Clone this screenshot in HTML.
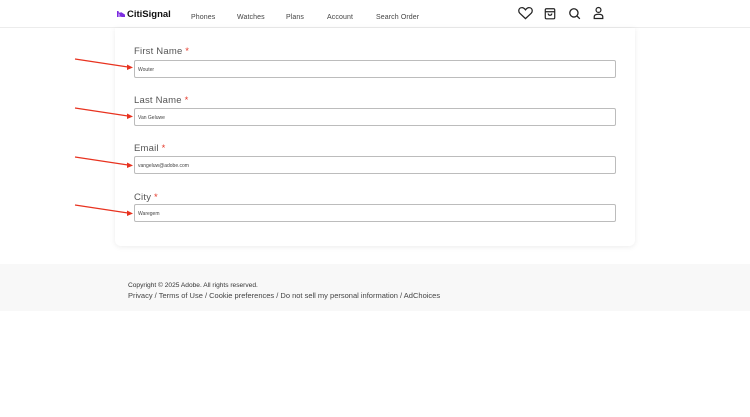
<!DOCTYPE html>
<html><head><meta charset="utf-8"><style>
*{margin:0;padding:0;box-sizing:border-box}
body{width:750px;height:417px;background:#fff;font-family:"Liberation Sans",sans-serif;position:relative;overflow:hidden}
.hdr{position:absolute;left:0;top:0;width:750px;height:28px;border-bottom:1px solid #ececec;background:#fff}
.logo{position:absolute;left:117px;top:9px;font-weight:bold;font-size:9.5px;color:#111}
.logo i{display:inline-block;width:8px;height:6px;background:#7c2ce0;margin-right:2px;vertical-align:0;clip-path:polygon(0 0,20% 0,20% 100%,0 100%,0 0,30% 30%,45% 30%,45% 100%,30% 100%,30% 30%,55% 20%,100% 60%,100% 100%,55% 100%);}
.nav{position:absolute;top:13.5px;font-size:7px;color:#444;letter-spacing:.1px}
.card{position:absolute;left:115px;top:28px;width:520px;height:218px;background:#fff;border-radius:0 0 6px 6px;box-shadow:0 1px 6px rgba(0,0,0,.08)}
.lbl{position:absolute;left:134px;font-size:9.5px;color:#555;letter-spacing:.2px}
.lbl b{color:#e53b2c;font-weight:normal}
.in{position:absolute;left:134px;width:482px;height:18px;border:1px solid #bcbcbc;border-radius:2px;font-size:5px;color:#444;padding:6px 0 0 3px}
.foot{position:absolute;left:0;top:264px;width:750px;height:47px;background:#f8f8f8}
.f1{position:absolute;left:128px;top:282px;font-size:6.6px;color:#333}
.f2{position:absolute;left:128px;top:291px;font-size:7.5px;color:#444}
</style></head><body>
<div class="hdr">
<div class="logo"><i></i>CitiSignal</div>
<div class="nav" style="left:191px">Phones</div>
<div class="nav" style="left:237px">Watches</div>
<div class="nav" style="left:286px">Plans</div>
<div class="nav" style="left:327px">Account</div>
<div class="nav" style="left:376px">Search Order</div>
<svg style="position:absolute;left:518px;top:6px" width="15" height="14" viewBox="0 0 24 22" fill="none" stroke="#222" stroke-width="2"><path d="M12 20 3 11.5C0 8.5 1 3 5.5 2.5 8.5 2 10.5 4 12 6c1.5-2 3.5-4 6.5-3.5C23 3 24 8.5 21 11.5z"/></svg>
<svg style="position:absolute;left:544px;top:7px" width="12" height="13" viewBox="0 0 20 22" fill="none" stroke="#222" stroke-width="2"><rect x="2" y="3" width="16" height="17" rx="2"/><path d="M2 8h16M7 11c0 4 6 4 6 0"/></svg>
<svg style="position:absolute;left:568px;top:7px" width="13" height="13" viewBox="0 0 22 22" fill="none" stroke="#222" stroke-width="2.2"><circle cx="10" cy="10" r="7"/><path d="M15 15l5 5"/></svg>
<svg style="position:absolute;left:593px;top:6px" width="11" height="14" viewBox="0 0 18 22" fill="none" stroke="#222" stroke-width="2"><circle cx="9" cy="6" r="4"/><path d="M2 20v-3c0-3 3-4 7-4s7 1 7 4v3z"/></svg>
</div>
<div class="card"></div>
<div class="lbl" style="top:46px">First Name <b>*</b></div>
<div class="in" style="top:60px">Wouter</div>
<div class="lbl" style="top:95px">Last Name <b>*</b></div>
<div class="in" style="top:108px">Van Geluwe</div>
<div class="lbl" style="top:143px">Email <b>*</b></div>
<div class="in" style="top:156px">vangeluw@adobe.com</div>
<div class="lbl" style="top:192px">City <b>*</b></div>
<div class="in" style="top:204px">Waregem</div>
<svg style="position:absolute;left:0;top:0" width="750" height="417">
<g stroke="#e8321f" stroke-width="1.2" fill="#e8321f">
<line x1="75" y1="59" x2="128" y2="67"/><polygon points="133,67.5 127,64.5 127,70" stroke="none"/>
<line x1="75" y1="108" x2="128" y2="116"/><polygon points="133,116.5 127,113.5 127,119" stroke="none"/>
<line x1="75" y1="157" x2="128" y2="165"/><polygon points="133,165.5 127,162.5 127,168" stroke="none"/>
<line x1="75" y1="205" x2="128" y2="213"/><polygon points="133,213.5 127,210.5 127,216" stroke="none"/>
</g></svg>
<div class="foot"></div>
<div class="f1">Copyright © 2025 Adobe. All rights reserved.</div>
<div class="f2">Privacy / Terms of Use / Cookie preferences / Do not sell my personal information / AdChoices</div>
</body></html>
